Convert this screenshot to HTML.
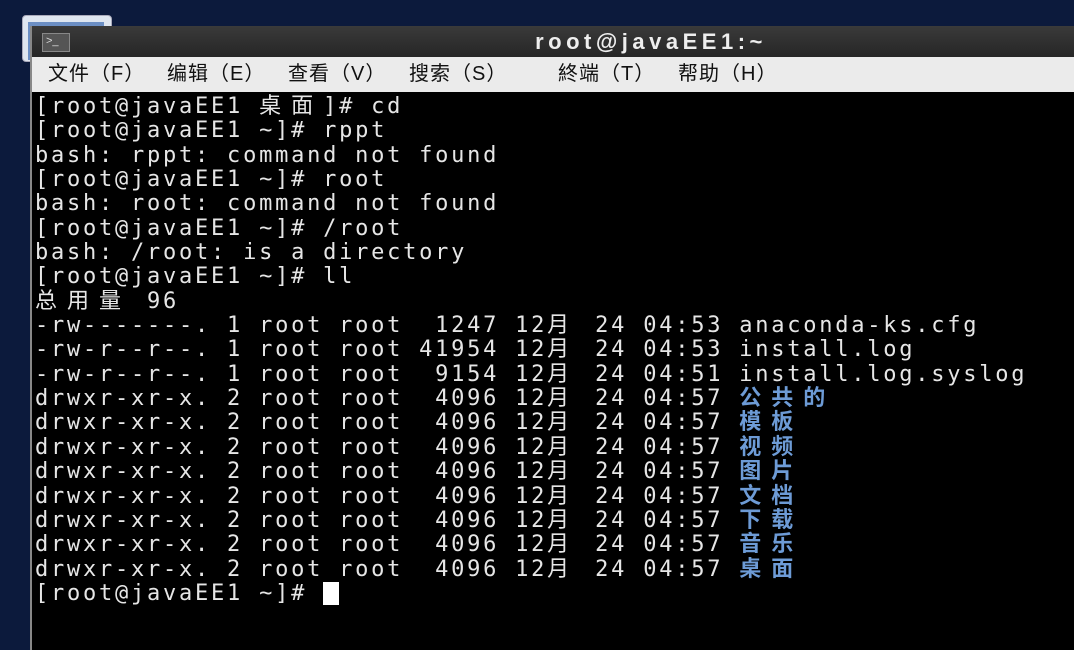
<!DOCTYPE html>
<html><head><meta charset="utf-8"><style>
body{margin:0;width:1074px;height:650px;overflow:hidden;background:#0c1a3c;position:relative;font-family:"Liberation Sans","Noto Sans CJK SC",sans-serif}
.icon{position:absolute;left:22px;top:15px;width:88px;height:45px;background:#dfe6f0;border-radius:4px;border:1px solid #aab}
.icon2{position:absolute;left:28px;top:22px;width:76px;height:38px;background:#6c8fc4}
.win{position:absolute;left:30px;top:26px;right:0;bottom:0;background:#000;border-left:2px solid #888}
.title{position:absolute;left:0;right:0;top:0;height:31px;background:linear-gradient(#3a3a3a,#262626);color:#eee;font-weight:bold;font-size:22px;letter-spacing:4.5px;text-align:center;line-height:31px}
.title span{position:relative;left:98px}
.ti{position:absolute;left:10px;top:7px;width:26px;height:17px;background:#555;border:1px solid #888}
.ti:after{content:">_";position:absolute;left:3px;top:-8px;font-size:11px;color:#ddd;font-weight:normal;letter-spacing:0}
.menu{position:absolute;left:0;right:0;top:31px;height:35px;background:#ebebeb;font-size:20px;letter-spacing:1px;color:#111;line-height:35px}
.menu span{position:absolute;top:0;white-space:nowrap}
.term{position:absolute;left:3px;top:69px;font-family:"DejaVu Sans Mono","Noto Sans CJK SC",monospace;font-size:22px;letter-spacing:2.76px;color:#e6e6e6}
.l{height:24.35px;line-height:24.35px;white-space:pre}
.w{display:inline-block;width:32px;letter-spacing:0;text-align:left}
.b{color:#6d9bd6;font-weight:bold}
.cur{display:inline-block;width:16px;height:23px;background:#fff;vertical-align:middle}
</style></head><body>
<div class="icon"></div><div class="icon2"></div>
<div class="win">
<div class="title"><div class="ti"></div><span>root@javaEE1:~</span></div>
<div class="menu"><span style="left:16px">文件（F）</span><span style="left:135px">编辑（E）</span><span style="left:256px">查看（V）</span><span style="left:377px">搜索（S）</span><span style="left:526px">終端（T）</span><span style="left:646px">帮助（H）</span></div>
<div class="term"><div class="l">[root@javaEE1 <span class="w">桌</span><span class="w">面</span>]# cd</div><div class="l">[root@javaEE1 ~]# rppt</div><div class="l">bash: rppt: command not found</div><div class="l">[root@javaEE1 ~]# root</div><div class="l">bash: root: command not found</div><div class="l">[root@javaEE1 ~]# /root</div><div class="l">bash: /root: is a directory</div><div class="l">[root@javaEE1 ~]# ll</div><div class="l"><span class="w">总</span><span class="w">用</span><span class="w">量</span> 96</div><div class="l">-rw-------. 1 root root  1247 12<span class="w">月</span> 24 04:53 anaconda-ks.cfg</div><div class="l">-rw-r--r--. 1 root root 41954 12<span class="w">月</span> 24 04:53 install.log</div><div class="l">-rw-r--r--. 1 root root  9154 12<span class="w">月</span> 24 04:51 install.log.syslog</div><div class="l">drwxr-xr-x. 2 root root  4096 12<span class="w">月</span> 24 04:57 <span class="b"><span class="w">公</span><span class="w">共</span><span class="w">的</span></span></div><div class="l">drwxr-xr-x. 2 root root  4096 12<span class="w">月</span> 24 04:57 <span class="b"><span class="w">模</span><span class="w">板</span></span></div><div class="l">drwxr-xr-x. 2 root root  4096 12<span class="w">月</span> 24 04:57 <span class="b"><span class="w">视</span><span class="w">频</span></span></div><div class="l">drwxr-xr-x. 2 root root  4096 12<span class="w">月</span> 24 04:57 <span class="b"><span class="w">图</span><span class="w">片</span></span></div><div class="l">drwxr-xr-x. 2 root root  4096 12<span class="w">月</span> 24 04:57 <span class="b"><span class="w">文</span><span class="w">档</span></span></div><div class="l">drwxr-xr-x. 2 root root  4096 12<span class="w">月</span> 24 04:57 <span class="b"><span class="w">下</span><span class="w">载</span></span></div><div class="l">drwxr-xr-x. 2 root root  4096 12<span class="w">月</span> 24 04:57 <span class="b"><span class="w">音</span><span class="w">乐</span></span></div><div class="l">drwxr-xr-x. 2 root root  4096 12<span class="w">月</span> 24 04:57 <span class="b"><span class="w">桌</span><span class="w">面</span></span></div><div class="l">[root@javaEE1 ~]# <span class="cur"></span></div></div>
</div>
</body></html>
